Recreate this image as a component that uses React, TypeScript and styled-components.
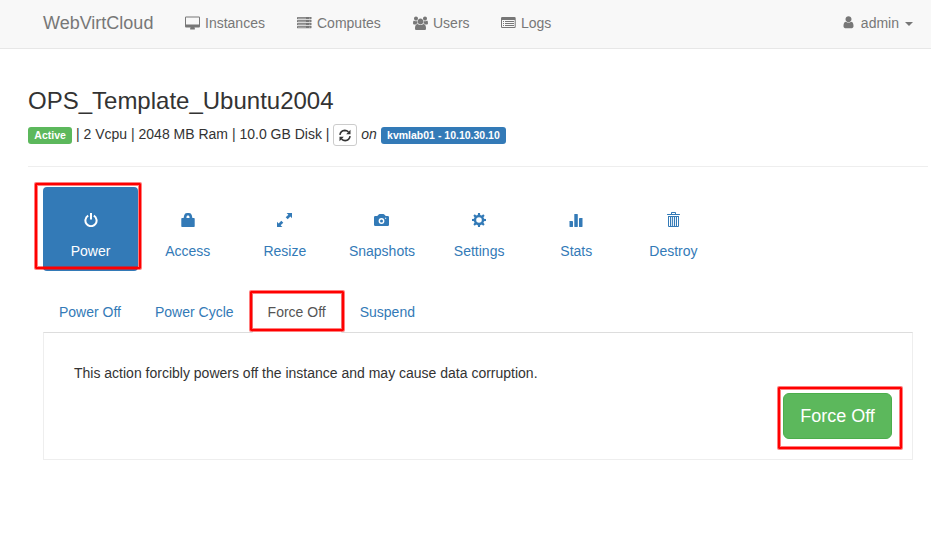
import React from "react";
import styled, { createGlobalStyle, css } from "styled-components";

const GlobalStyle = createGlobalStyle`
  *, *::before, *::after { box-sizing: border-box; }
  body {
    margin: 0;
    background: #fff;
    color: #333;
    font: 14px/20px "Liberation Sans", Arial, sans-serif;
  }
`;

const Page = styled.div`
  width: 931px;
  height: 541px;
  overflow: hidden;
`;

const Navbar = styled.nav`
  display: flex;
  align-items: flex-start;
  height: 49px;
  padding: 13px 18px 0 43px;
  background: #f8f8f8;
  border-bottom: 1px solid #e7e7e7;
  color: #777;
`;

const Brand = styled.a`
  width: 142px;
  font-size: 18px;
`;

const NavItem = styled.a<{ $width?: number; $gap?: number }>`
  display: flex;
  gap: ${(p) => p.$gap ?? 5}px;
  ${(p) => p.$width && css`width: ${p.$width}px;`}
  svg { margin-top: 3px; }
`;

const UserMenu = styled(NavItem)`
  margin-left: auto;
`;

const Caret = styled.span`
  margin: 9px 0 0 -1px;
  height: 4px;
  border: 4px solid transparent;
  border-top-color: #777;
  border-bottom: 0;
`;

const Content = styled.main`
  padding: 39px 3px 0 28px;
`;

const Title = styled.h3`
  margin: 0;
  font-size: 24px;
  font-weight: 500;
  line-height: 26px;
`;

const Summary = styled.div`
  display: flex;
  height: 22px;
  margin-top: 10px;
  white-space: pre;
`;

const Label = styled.span<{ $color: string }>`
  height: 17px;
  margin-top: 3px;
  padding: 0 6.3px;
  border-radius: 3px;
  background: ${(p) => p.$color};
  color: #fff;
  font-size: 10.5px;
  font-weight: 700;
  line-height: 17px;
`;

const RefreshButton = styled.button`
  display: flex;
  align-items: center;
  justify-content: center;
  width: 24px;
  height: 22px;
  margin-right: 4px;
  padding: 0;
  border: 1px solid #ccc;
  border-radius: 3px;
  background: #fff;
  color: #333;
`;

const Divider = styled.hr`
  height: 1px;
  margin: 20px 0;
  border: 0;
  background: #eee;
`;

const Tools = styled.div`
  display: flex;
  gap: 2px;
  width: 678px;
  margin-left: 15px;
`;

const Tool = styled.a<{ $active?: boolean }>`
  position: relative;
  display: flex;
  flex: 1;
  flex-direction: column;
  align-items: center;
  gap: 13px;
  height: 84px;
  padding-top: 25px;
  border-radius: 4px;
  color: ${(p) => (p.$active ? "#fff" : "#337ab7")};
  background: ${(p) => (p.$active ? "#337ab7" : "transparent")};
`;

const Glyph = styled.span`
  display: flex;
  height: 16px;
  align-items: center;
`;

const SubTabs = styled.div`
  display: flex;
  gap: 2px;
  height: 41px;
  margin: 20px 0 0 15px;
`;

const SubTab = styled.a<{ $active?: boolean }>`
  position: relative;
  height: 42px;
  padding: 10px 15px;
  border: 1px solid transparent;
  border-radius: 4px 4px 0 0;
  color: #337ab7;
  ${(p) =>
    p.$active &&
    css`
      border-color: #ddd #ddd #fff;
      background: #fff;
      color: #555;
    `}
`;

const Panel = styled.section`
  display: flex;
  flex-direction: column;
  width: 870px;
  height: 128px;
  margin-left: 15px;
  padding: 30px 20px 20px 30px;
  border: 1px solid #eee;
  border-top-color: #ddd;
`;

const Message = styled.p`
  margin: 0 0 10px;
`;

const ForceButton = styled.button`
  position: relative;
  align-self: flex-end;
  width: 109px;
  height: 46px;
  padding: 0;
  border: 1px solid #4cae4c;
  border-radius: 6px;
  background: #5cb85c;
  color: #fff;
  font: 18px/24px "Liberation Sans", Arial, sans-serif;
`;

const Highlight = styled.span<{ $inset: string }>`
  position: absolute;
  inset: ${(p) => p.$inset};
  border: 2px solid #f00;
  border-radius: 1px;
  box-shadow: 0 0 0 1px rgba(255, 0, 0, 0.5);
  pointer-events: none;

  &::after {
    content: "";
    position: absolute;
    inset: 0;
    border: 1px solid rgba(255, 0, 0, 0.5);
  }
`;

const Svg = ({ w, h = 14, box, children }: { w: number; h?: number; box?: string; children: React.ReactNode }) => (
  <svg width={w} height={h} viewBox={box ?? `0 0 ${w} ${h}`} fill="currentColor" aria-hidden="true">
    {children}
  </svg>
);

const DesktopIcon = () => (
  <Svg w={15} box="0 -64 1920 1792">
    <path d="M1792 992v-832q0-13-9.5-22.5t-22.5-9.5h-1600q-13 0-22.5 9.5t-9.5 22.5v832q0 13 9.5 22.5t22.5 9.5h1600q13 0 22.5-9.5t9.5-22.5zm128-832v1088q0 66-47 113t-113 47h-544q0 37 16 77.5t32 71 16 43.5q0 26-19 45t-45 19h-512q-26 0-45-19t-19-45q0-14 16-44t32-70 16-78h-544q-66 0-113-47t-47-113v-1088q0-66 47-113t113-47h1600q66 0 113 47t47 113z" />
  </Svg>
);

const ServerIcon = () => (
  <Svg w={15}>
    {[1, 4, 7, 10].map((y) => (
      <g key={y}>
        <rect x="0" y={y} width="14.5" height="2.2" rx=".4" />
        <path d={`M1 ${y + 0.7}h8v.7H1zM12 ${y + 0.7}h1.2v.7H12z`} fill="#f8f8f8" opacity=".65" />
      </g>
    ))}
  </Svg>
);

const UsersIcon = () => (
  <Svg w={15} box="64 -64 1920 1792">
    <path d="M657 896q-162 5-265 128h-134q-82 0-138-40.5t-56-118.5q0-353 124-353 6 0 43.5 21t97.5 42.5 119 21.5q67 0 133-23-5 37-5 66 0 139 81 256zm1071 637q0 120-73 189.5t-194 69.5h-874q-121 0-194-69.5t-73-189.5q0-53 3.5-103.5t14-109 26.5-108.5 43-97.5 62-81 85.5-53.5 111.5-20q10 0 43 21.5t73 48 107 48 135 21.5 135-21.5 107-48 73-48 43-21.5q61 0 111.5 20t85.5 53.5 62 81 43 97.5 26.5 108.5 14 109 3.5 103.5zm-1024-1277q0 106-75 181t-181 75-181-75-75-181 75-181 181-75 181 75 75 181zm704 384q0 159-112.5 271.5t-271.5 112.5-271.5-112.5-112.5-271.5 112.5-271.5 271.5-112.5 271.5 112.5 112.5 271.5zm576 225q0 78-56 118.5t-138 40.5h-134q-103-123-265-128 81-117 81-256 0-29-5-66 66 23 133 23 59 0 119-21.5t97.5-42.5 43.5-21q124 0 124 353zm-128-609q0 106-75 181t-181 75-181-75-75-181 75-181 181-75 181 75 75 181z" />
  </Svg>
);

const LogsIcon = () => (
  <Svg w={15}>
    <path fillRule="evenodd" d="M1.2 1h12.3q1.2 0 1.2 1.2v8.6q0 1.2-1.2 1.2H1.2Q0 12 0 10.8V2.2Q0 1 1.2 1zM1 4v6.8q0 .2.2.2h12.3q.2 0 .2-.2V4z" />
    <path d="M2 5h1v1H2zM4 5h9v1H4zM2 7h1v1H2zM4 7h9v1H4zM2 9h1v1H2zM4 9h9v1H4z" />
  </Svg>
);

const UserIcon = () => (
  <Svg w={11} box="192 100 1408 1792">
    <path d="M1536 1399q0 109-62.5 187t-150.5 78h-854q-88 0-150.5-78t-62.5-187q0-85 8.5-160.5t31.5-152 58.5-131 94-89 134.5-34.5q131 128 313 128t313-128q76 0 134.5 34.5t94 89 58.5 131 31.5 152 8.5 160.5zm-256-887q0 159-112.5 271.5t-271.5 112.5-271.5-112.5-112.5-271.5 112.5-271.5 271.5-112.5 271.5 112.5 112.5 271.5z" />
  </Svg>
);

const RefreshIcon = () => (
  <Svg w={12} h={13}>
    <path d="M.9 5.8Q1.6 1.6 5.8 1.4q2 0 3.7 1.4M11.1 7.2Q10.4 11.4 6.2 11.6q-2 0-3.7-1.4" fill="none" stroke="currentColor" strokeWidth="1.6" />
    <path d="M11.5.8v4.4H7.2zM.5 12.2V7.8h4.3z" />
  </Svg>
);

const PowerIcon = () => (
  <Svg w={14}>
    <path d="M4.2 2.7a5.6 5.6 0 1 0 5.6 0" fill="none" stroke="currentColor" strokeWidth="2" />
    <path d="M6 0h2v6.5H6z" />
  </Svg>
);

const LockIcon = () => (
  <Svg w={14}>
    <path fillRule="evenodd" d="M1 5h1.6l.6-2.8Q3.8 0 6 0h2q2.2 0 2.8 2.2l.6 2.8H13q.7 0 .7.7v7.6q0 .7-.7.7H1q-.7 0-.7-.7V5.7Q.3 5 1 5zm4.4 0h3.2l-.3-1.7Q8.1 2.4 7.4 2.4h-.8q-.7 0-.9.9z" />
  </Svg>
);

const ResizeIcon = () => (
  <Svg w={15}>
    <path d="M9.6 0H15v5.2l-1.6-1.6-2.7 2.6-2-1.9 2.7-2.6zM0 8.8l1.6 1.6 2.7-2.6 2 1.9-2.7 2.6L5.4 14H0z" />
  </Svg>
);

const CameraIcon = () => (
  <Svg w={15}>
    <path d="M1.2 3h2L4.7 1.4Q5 1 5.6 1h3.8q.6 0 .9.4L11.8 3h2Q15 3 15 4.2v7.6q0 1.2-1.2 1.2H1.2Q0 13 0 11.8V4.2Q0 3 1.2 3z" />
    <circle cx="7.5" cy="8" r="2.2" fill="none" stroke="#fff" strokeWidth="1.4" />
    <path d="M11 4.7h1.2v1H11z" fill="#fff" />
  </Svg>
);

const GearIcon = () => (
  <Svg w={14}>
    {[0, 45, 90, 135].map((r) => (
      <path key={r} transform={`rotate(${r} 7 7)`} d="M5.7 3 6 0h2l.3 3zM5.7 11l.3 3h2l.3-3z" />
    ))}
    <circle cx="7" cy="7" r="4" fill="none" stroke="currentColor" strokeWidth="2.4" />
  </Svg>
);

const StatsIcon = () => (
  <Svg w={14}>
    <rect x=".5" y="8" width="3.5" height="6" rx=".4" />
    <rect x="5.3" y="1" width="3.5" height="13" rx=".4" />
    <rect x="10" y="5" width="3.5" height="9" rx=".4" />
  </Svg>
);

const TrashIcon = () => (
  <Svg w={13} h={16}>
    <path fillRule="evenodd" d="M4 2V.8Q4 0 4.8 0h3.4Q9 0 9 .8V2h3.5q.5 0 .5.5V3H0v-.5Q0 2 .5 2zm1 0h3V1H5zM1 4h11v10q0 1-1 1H2q-1 0-1-1zM2 5v9h1V5zm2.2 0v9h.9V5zM6.1 5v9H7V5zM8 5v9h.9V5zM10 5v9h1V5z" />
  </Svg>
);

const tools = [
  { name: "Power", Icon: PowerIcon },
  { name: "Access", Icon: LockIcon },
  { name: "Resize", Icon: ResizeIcon },
  { name: "Snapshots", Icon: CameraIcon },
  { name: "Settings", Icon: GearIcon },
  { name: "Stats", Icon: StatsIcon },
  { name: "Destroy", Icon: TrashIcon },
];

export default function App() {
  return (
    <Page>
      <GlobalStyle />
      <Navbar>
        <Brand>WebVirtCloud</Brand>
        <NavItem $width={112}><DesktopIcon />Instances</NavItem>
        <NavItem $width={115.5}><ServerIcon />Computes</NavItem>
        <NavItem $width={88.5} $gap={5.5}><UsersIcon />Users</NavItem>
        <NavItem><LogsIcon />Logs</NavItem>
        <UserMenu $gap={7}><UserIcon />admin<Caret /></UserMenu>
      </Navbar>
      <Content>
        <Title>OPS_Template_Ubuntu2004</Title>
        <Summary>
          <Label $color="#5cb85c">Active</Label>
          <span>{" | 2 Vcpu | 2048 MB Ram | 10.0 GB Disk | "}</span>
          <RefreshButton aria-label="Refresh"><RefreshIcon /></RefreshButton>
          <em>{"on "}</em>
          <Label $color="#337ab7">kvmlab01 - 10.10.30.10</Label>
        </Summary>
        <Divider />
        <Tools>
          {tools.map(({ name, Icon }, i) => (
            <Tool key={name} $active={i === 0}>
              <Glyph><Icon /></Glyph>
              {name}
              {i === 0 && <Highlight $inset="-4px -3px 2px -8px" />}
            </Tool>
          ))}
        </Tools>
        <SubTabs>
          {["Power Off", "Power Cycle", "Force Off", "Suspend"].map((name) => (
            <SubTab key={name} $active={name === "Force Off"}>
              {name}
              {name === "Force Off" && <Highlight $inset="-1px -3px 1px -3px" />}
            </SubTab>
          ))}
        </SubTabs>
        <Panel>
          <Message>This action forcibly powers off the instance and may cause data corruption.</Message>
          <ForceButton>
            Force Off
            <Highlight $inset="-7px -11px -11px -6px" />
          </ForceButton>
        </Panel>
      </Content>
    </Page>
  );
}
